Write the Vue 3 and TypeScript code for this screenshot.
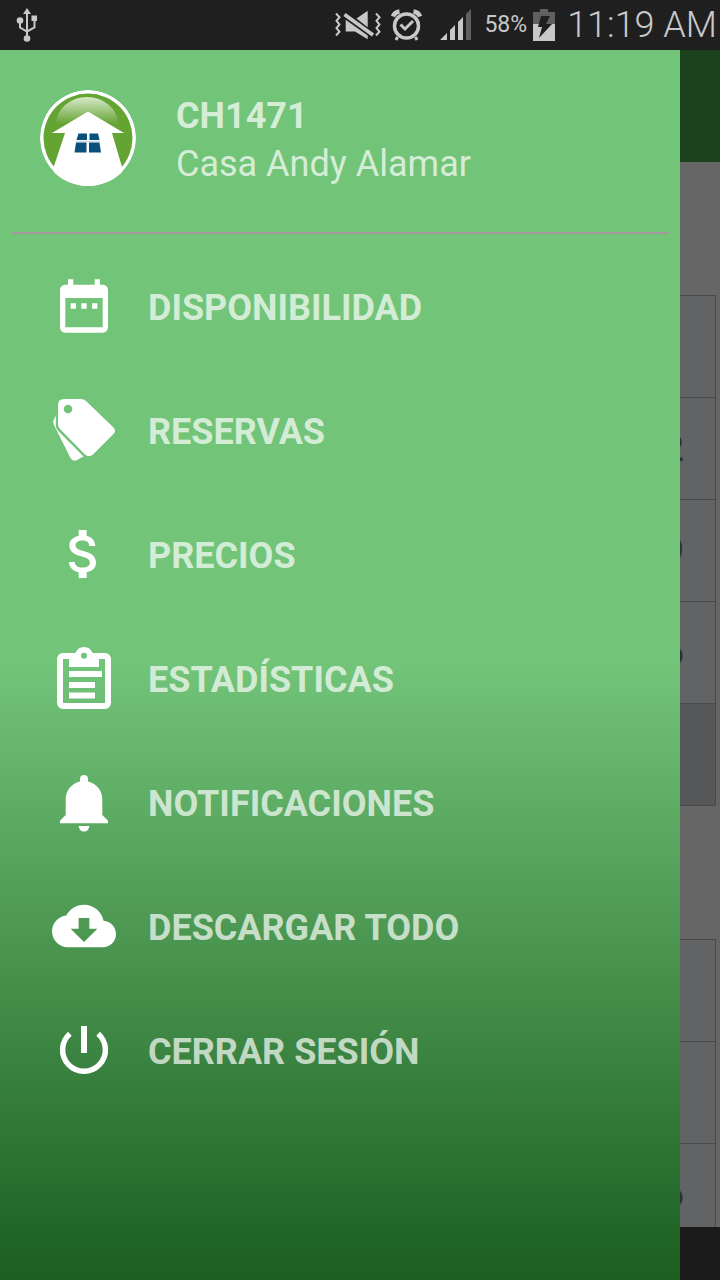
<script setup lang="ts">
import { ref } from 'vue'

type IconName = 'calendar' | 'tags' | 'money' | 'clipboard' | 'bell' | 'cloud' | 'power'

interface MenuItem {
  icon: IconName
  label: string
}

interface Month {
  id: string
  days: string[]
}

const account = { code: 'CH1471', name: 'Casa Andy Alamar' }

const menu: MenuItem[] = [
  { icon: 'calendar', label: 'DISPONIBILIDAD' },
  { icon: 'tags', label: 'RESERVAS' },
  { icon: 'money', label: 'PRECIOS' },
  { icon: 'clipboard', label: 'ESTADÍSTICAS' },
  { icon: 'bell', label: 'NOTIFICACIONES' },
  { icon: 'cloud', label: 'DESCARGAR TODO' },
  { icon: 'power', label: 'CERRAR SESIÓN' },
]

const months: Month[] = [
  { id: 'first', days: ['', '12', '19', '26', ''] },
  { id: 'second', days: ['', '', '16'] },
]

const selected = ref<IconName | null>(null)
</script>

<template>
  <div class="screen">
    <header class="status">
      <svg class="usb" width="22" height="36" viewBox="0 0 22 36" fill="#c8c8c8">
        <path d="M11 1l4 6h-3v27h-2V7H7z" />
        <circle cx="11" cy="31.500" r="3.300" />
        <circle cx="4" cy="13.500" r="3.300" />
        <rect x="15.500" y="8.500" width="5.500" height="5.500" />
        <path d="M4 14v6.500l7 4 7.500-4V13" fill="none" stroke="#c8c8c8" stroke-width="2" />
      </svg>

      <div class="indicators">
        <svg width="46" height="32" viewBox="0 0 46 32">
          <path
            d="M21.500 9.500L32.700 1.700V18.200zM10.700 10.800L32.700 26.500V30.300L20 22.500H10.700z"
            fill="#c8c8c8"
          />
          <path d="M9.500 5.600L38 25.900" stroke="#c8c8c8" stroke-width="3.700" />
          <path
            d="M1 4.500l3.500 3.700-3 3.600 3 3.700-3 3.600 3 3.700-3.500 3.700M41 4.500l3.500 3.700-3 3.600 3 3.700-3 3.600 3 3.700-3.500 3.700"
            fill="none"
            stroke="#c8c8c8"
            stroke-width="2"
          />
        </svg>
        <svg class="alarm" width="32" height="34" viewBox="0 0 32 34" fill="none" stroke="#c8c8c8">
          <circle cx="15.500" cy="18" r="12" stroke-width="3.500" />
          <path d="M9.500 16.500l4.500 4.500 8-8" stroke-width="3" />
          <path d="M6.500 29l-1.500 3M24.500 29l1.500 3" stroke-width="3" />
          <path d="M2 8.500C3 5.500 5 4 8.500 3.500M29 8.500C28 5.500 26 4 22.500 3.500" stroke-width="4.500" />
        </svg>
        <svg class="signal" width="32" height="32" viewBox="0 0 32 32" fill="#c8c8c8">
          <path d="M0 31l7-7v7zM10 21l5-5v15h-5zM18 13l5-5v23h-5z" />
          <path d="M26 5l5-5v31h-5z" fill="#606060" />
        </svg>
        <span class="percent">58%</span>
        <svg class="battery" width="22" height="32" viewBox="0 0 22 32">
          <path d="M7 0h8v3h7v12H0V3h7z" fill="#606060" />
          <path d="M0 15h22v17H0z" fill="#c8c8c8" />
          <path d="M8 7h9l-4 8h6L6 29l3-11H5z" fill="#1f1f1f" />
        </svg>
        <time class="clock">11:19 AM</time>
      </div>
    </header>

    <div class="body">
      <main class="page">
        <div class="toolbar"></div>
        <div class="months">
          <table v-for="month in months" :key="month.id" :class="['month', month.id]">
            <tbody>
              <tr v-for="(day, i) in month.days" :key="i">
                <td>{{ day }}</td>
              </tr>
            </tbody>
          </table>
        </div>
        <footer class="bottom"></footer>
      </main>

      <aside class="drawer">
        <div class="account">
          <svg class="logo" width="96" height="96" viewBox="0 0 96 96">
            <defs>
              <linearGradient id="gloss" x1="0" y1="0" x2="0" y2="1">
                <stop offset="0" stop-color="#d9e8ca" />
                <stop offset="1" stop-color="#64a433" />
              </linearGradient>
              <clipPath id="disc"><circle cx="48" cy="48" r="48" /></clipPath>
            </defs>
            <g clip-path="url(#disc)">
              <circle cx="48" cy="48" r="48" fill="#fff" />
              <circle cx="48" cy="48" r="44.500" fill="#64a433" />
              <path d="M16 34a31 27 0 0 1 62 0z" fill="url(#gloss)" />
              <path d="M48 21.500L84 43H72l10 34 2 19H12l2-20 11-33H12z" fill="#fff" />
              <path d="M14 76c8 12 20 17 34 17s26-5 34-16v19H14z" fill="#fff" />
            </g>
            <path
              d="M38.500 43.500H47v6.500H36.500zM49.500 43.500H58l1.500 6.500h-10zM36 52.500h10.500v10h-12zM49 52.500h10.500l1.500 10H49z"
              fill="#0b4f7d"
            />
            <path d="M36 51.300h24" stroke="#c4d5e3" stroke-width="1" />
          </svg>
          <div class="who">
            <strong>{{ account.code }}</strong>
            <span>{{ account.name }}</span>
          </div>
        </div>

        <nav class="menu">
          <button
            v-for="item in menu"
            :key="item.icon"
            type="button"
            class="item"
            @click="selected = item.icon"
          >
            <svg v-if="item.icon === 'calendar'" class="icon" viewBox="0 0 24 24">
              <path
                d="M9 11H7v2h2v-2zm4 0h-2v2h2v-2zm4 0h-2v2h2v-2zm2-7h-1V2h-2v2H8V2H6v2H5c-1.110 0-1.990.900-1.990 2L3 20c0 1.100.890 2 2 2h14c1.100 0 2-.900 2-2V6c0-1.100-.900-2-2-2zm0 16H5V9h14v11z"
              />
            </svg>
            <svg v-else-if="item.icon === 'tags'" class="icon" viewBox="0 0 64 64">
              <path
                fill-rule="evenodd"
                d="M12 1h17q3 0 5 2l27 26q4 4 0 7.500L41 56.500q-4 3.500-8 0L8 31q-2-2-2-5V7q0-6 6-6zM16 6.700a4.300 4.300 0 1 0 0 8.600 4.300 4.300 0 1 0 0-8.600z"
              />
              <path d="M3.800 17.500v10q0 3 2 5L31.500 58.500l-6.500 3.500q-4 2-6.500-2L2 27q-1.500-3.500 0-6z" />
            </svg>
            <svg v-else-if="item.icon === 'money'" class="icon" viewBox="0 0 24 24">
              <path
                d="M11.800 10.900c-2.270-.590-3-1.200-3-2.150 0-1.090 1.010-1.850 2.700-1.850 1.780 0 2.440.850 2.500 2.100h2.210c-.070-1.720-1.120-3.300-3.210-3.810V3h-3v2.160c-1.940.420-3.500 1.680-3.500 3.610 0 2.310 1.910 3.460 4.700 4.130 2.500.600 3 1.480 3 2.410 0 .690-.490 1.790-2.700 1.790-2.060 0-2.870-.920-2.980-2.100h-2.200c.120 2.190 1.760 3.420 3.680 3.830V21h3v-2.150c1.950-.370 3.500-1.500 3.500-3.550 0-2.840-2.430-3.810-4.700-4.400z"
              />
            </svg>
            <svg v-else-if="item.icon === 'clipboard'" class="icon" viewBox="0 0 64 64">
              <path
                fill-rule="evenodd"
                d="M11 7h12.500a9 9 0 0 1 17 0H53a6 6 0 0 1 6 6v44a6 6 0 0 1-6 6H11a6 6 0 0 1-6-6V13a6 6 0 0 1 6-6zM11 13v44h42V13h-6v8H17v-8zM32 6.700a3 3 0 1 0 0 6 3 3 0 1 0 0-6z"
              />
              <path d="M17 25h33v6H17zM17 36h26v6H17zM17 46.500h26v6H17z" />
            </svg>
            <svg v-else-if="item.icon === 'bell'" class="icon" viewBox="0 0 64 64">
              <path
                d="M28 11.600V9a4 4 0 0 1 8 0v2.600C45 14 50.300 21 50.300 29v16l5.700 5.700v2.600H8v-2.600L13.700 45V29C13.700 21 19 14 28 11.600zM26.700 56h10.600a5.300 5.600 0 0 1-10.600 0z"
              />
            </svg>
            <svg v-else-if="item.icon === 'cloud'" class="icon" viewBox="0 0 24 24">
              <path
                d="M19.350 10.040C18.670 6.590 15.640 4 12 4 9.110 4 6.600 5.640 5.350 8.040 2.340 8.360 0 10.910 0 14c0 3.310 2.690 6 6 6h13c2.760 0 5-2.240 5-5 0-2.640-2.050-4.780-4.650-4.960zM17 13l-5 5-5-5h3V9h4v4h3z"
              />
            </svg>
            <svg v-else class="icon" viewBox="0 0 64 64">
              <path d="M29 8h6v27h-6z" />
              <path
                d="M17.900 15.700a21.400 21.400 0 1 0 28.200 0"
                fill="none"
                stroke="#fff"
                stroke-width="5.500"
              />
            </svg>
            <span class="label">{{ item.label }}</span>
          </button>
        </nav>
      </aside>
    </div>
  </div>
</template>

<style>
body {
  margin: 0;
}
</style>

<style scoped>
.screen {
  display: flex;
  flex-direction: column;
  height: 100vh;
  overflow: hidden;
  font-family: Roboto, 'Noto Sans', sans-serif;
}

.status {
  display: flex;
  flex: none;
  align-items: center;
  justify-content: space-between;
  box-sizing: border-box;
  height: 50px;
  padding: 0 3px 0 16px;
  background: #1f1f1f;
  color: #c8c8c8;
}

.indicators {
  display: flex;
  align-items: center;
}

.alarm {
  margin-left: 10px;
}

.signal {
  margin-left: 17px;
}

.percent {
  margin: 0 6px 0 12px;
  font-size: 23px;
  line-height: 50px;
}

.clock {
  margin-left: 12px;
  font-size: 36px;
  font-weight: 300;
  line-height: 50px;
}

.body {
  position: relative;
  flex: 1;
  min-height: 0;
}

.page {
  display: flex;
  flex-direction: column;
  height: 100%;
  background: #666;
}

.toolbar {
  flex: none;
  height: 112px;
  background: #1c411d;
}

.months {
  flex: 1;
  min-height: 0;
  overflow: hidden;
  padding: 133px 4px 0 0;
}

.month {
  width: 104px;
  margin: 0 0 133px auto;
  border-spacing: 0;
  border-right: 1px solid #4a4a4b;
}

.first {
  border-bottom: 1px solid #4a4a4b;
}

.month td {
  box-sizing: border-box;
  height: 102px;
  padding: 0;
  border-top: 1px solid #4a4a4b;
  background: #626365;
  color: #2f3032;
  font-size: 36px;
  font-weight: 500;
  text-align: center;
}

.first tr:last-child td {
  background: #555759;
}

.bottom {
  flex: none;
  height: 53px;
  background: #1b1b1b;
}

.drawer {
  position: absolute;
  inset: 0 40px 0 0;
  background: linear-gradient(#72c479 0, #72c479 50%, #1b5e20 100%);
}

.account {
  display: flex;
  align-items: flex-start;
  gap: 40px;
  box-sizing: border-box;
  height: 184px;
  margin: 0 11px 0 12px;
  padding: 40px 28px 0;
  border-bottom: 2px solid #a29a9f;
}

.logo {
  flex: none;
}

.who {
  display: flex;
  flex-direction: column;
  padding-top: 2px;
  color: #d5edd7;
  font-size: 36px;
  line-height: 48px;
}

.who strong {
  font-weight: 700;
}

.menu {
  display: flex;
  flex-direction: column;
  padding-top: 10px;
}

.item {
  display: flex;
  align-items: center;
  gap: 32px;
  height: 124px;
  padding: 0 52px;
  border: 0;
  background: none;
  color: rgba(255, 255, 255, 0.7);
  font: 700 36px/48px Roboto, 'Noto Sans', sans-serif;
  text-align: left;
  cursor: pointer;
}

.label {
  padding-top: 4px;
}

.icon {
  flex: none;
  width: 64px;
  height: 64px;
  fill: #fff;
}
</style>
